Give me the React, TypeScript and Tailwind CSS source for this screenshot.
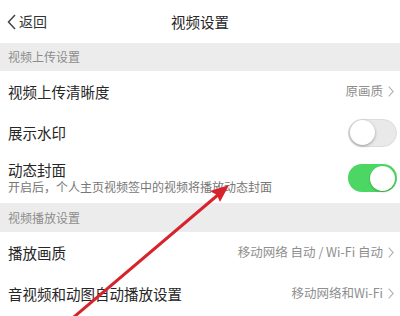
import React from "react";

const Chevron = () => (
  <svg width="6" height="11" viewBox="0 0 6 11" className="ml-[5px]">
    <path d="M0.7 0.7 L5.2 5.5 L0.7 10.3" fill="none" stroke="#b3b3b3" strokeWidth="1.1" />
  </svg>
);

const Toggle = ({ on }: { on: boolean }) =>
  on ? (
    <div className="w-[49px] h-[28px] rounded-full bg-[#4cd663] flex items-center justify-end px-[2px]">
      <div className="w-[25px] h-[25px] rounded-full bg-white shadow-[0_1px_2px_rgba(0,0,0,0.25)]" />
    </div>
  ) : (
    <div className="w-[49px] h-[28px] rounded-full bg-[#e9e9e9] border border-[#dcdcdc] flex items-center justify-start px-[1px]">
      <div className="w-[25px] h-[25px] rounded-full bg-white shadow-[0_1px_3px_rgba(0,0,0,0.35)]" />
    </div>
  );

const Section = ({ title }: { title: string }) => (
  <div className="h-[29px] bg-[#ececec] flex items-center pl-[8px] text-[12px] text-[#8c8c8c]">
    {title}
  </div>
);

const Row = ({ title, right, pr }: { title: string; right?: React.ReactNode; pr: string }) => (
  <div className={`h-[41px] bg-white flex items-center justify-between pl-[8px] ${pr}`}>
    <span className="text-[14.5px] text-[#262626]">{title}</span>
    {right}
  </div>
);

const Value = ({ text }: { text: string }) => (
  <div className="flex items-center text-[12.5px] text-[#8e8e8e]">
    <span>{text}</span>
    <Chevron />
  </div>
);

export default function App() {
  return (
    <div
      className="relative w-[400px] h-[316px] overflow-hidden bg-white"
      style={{ fontFamily: '"Noto Sans CJK SC", "Noto Sans", sans-serif' }}
    >
      <div className="h-[43px] bg-white flex items-center relative">
        <div className="flex items-center pl-[7px] text-[14px] text-[#333]">
          <svg width="9" height="16" viewBox="0 0 9 16" className="mr-[3px]">
            <path d="M8 1 L1.5 8 L8 15" fill="none" stroke="#444" strokeWidth="1.5" />
          </svg>
          <span>返回</span>
        </div>
        <div className="absolute left-0 right-0 text-center text-[14.5px] text-[#262626] pointer-events-none">
          视频设置
        </div>
      </div>
      <div className="h-[28px] bg-[#ececec] flex items-center pl-[8px] text-[12px] text-[#8c8c8c]">
        视频上传设置
      </div>
      <Row title="视频上传清晰度" pr="pr-[6px]" right={<Value text="原画质" />} />
      <Row title="展示水印" pr="pr-[3px]" right={<Toggle on={false} />} />
      <div className="h-[50px] bg-white flex items-center justify-between pl-[8px] pr-[3px]">
        <div className="flex flex-col">
          <span className="text-[14.5px] leading-[18px] text-[#262626]">动态封面</span>
          <span className="text-[12px] leading-[16px] text-[#777]">
            开启后，个人主页视频签中的视频将播放动态封面
          </span>
        </div>
        <Toggle on={true} />
      </div>
      <Section title="视频播放设置" />
      <Row title="播放画质" pr="pr-[6px]" right={<Value text="移动网络 自动 / Wi-Fi 自动" />} />
      <Row title="音视频和动图自动播放设置" pr="pr-[6px]" right={<Value text="移动网络和Wi-Fi" />} />

      <svg className="absolute left-0 top-0 pointer-events-none" width="400" height="316" viewBox="0 0 400 316">
        <line x1="68" y1="322" x2="219" y2="194" stroke="#d7232c" strokeWidth="3" strokeLinecap="round" />
        <polygon points="229,185 220,202 217,195 210,191" fill="#d7232c" />
      </svg>
    </div>
  );
}
